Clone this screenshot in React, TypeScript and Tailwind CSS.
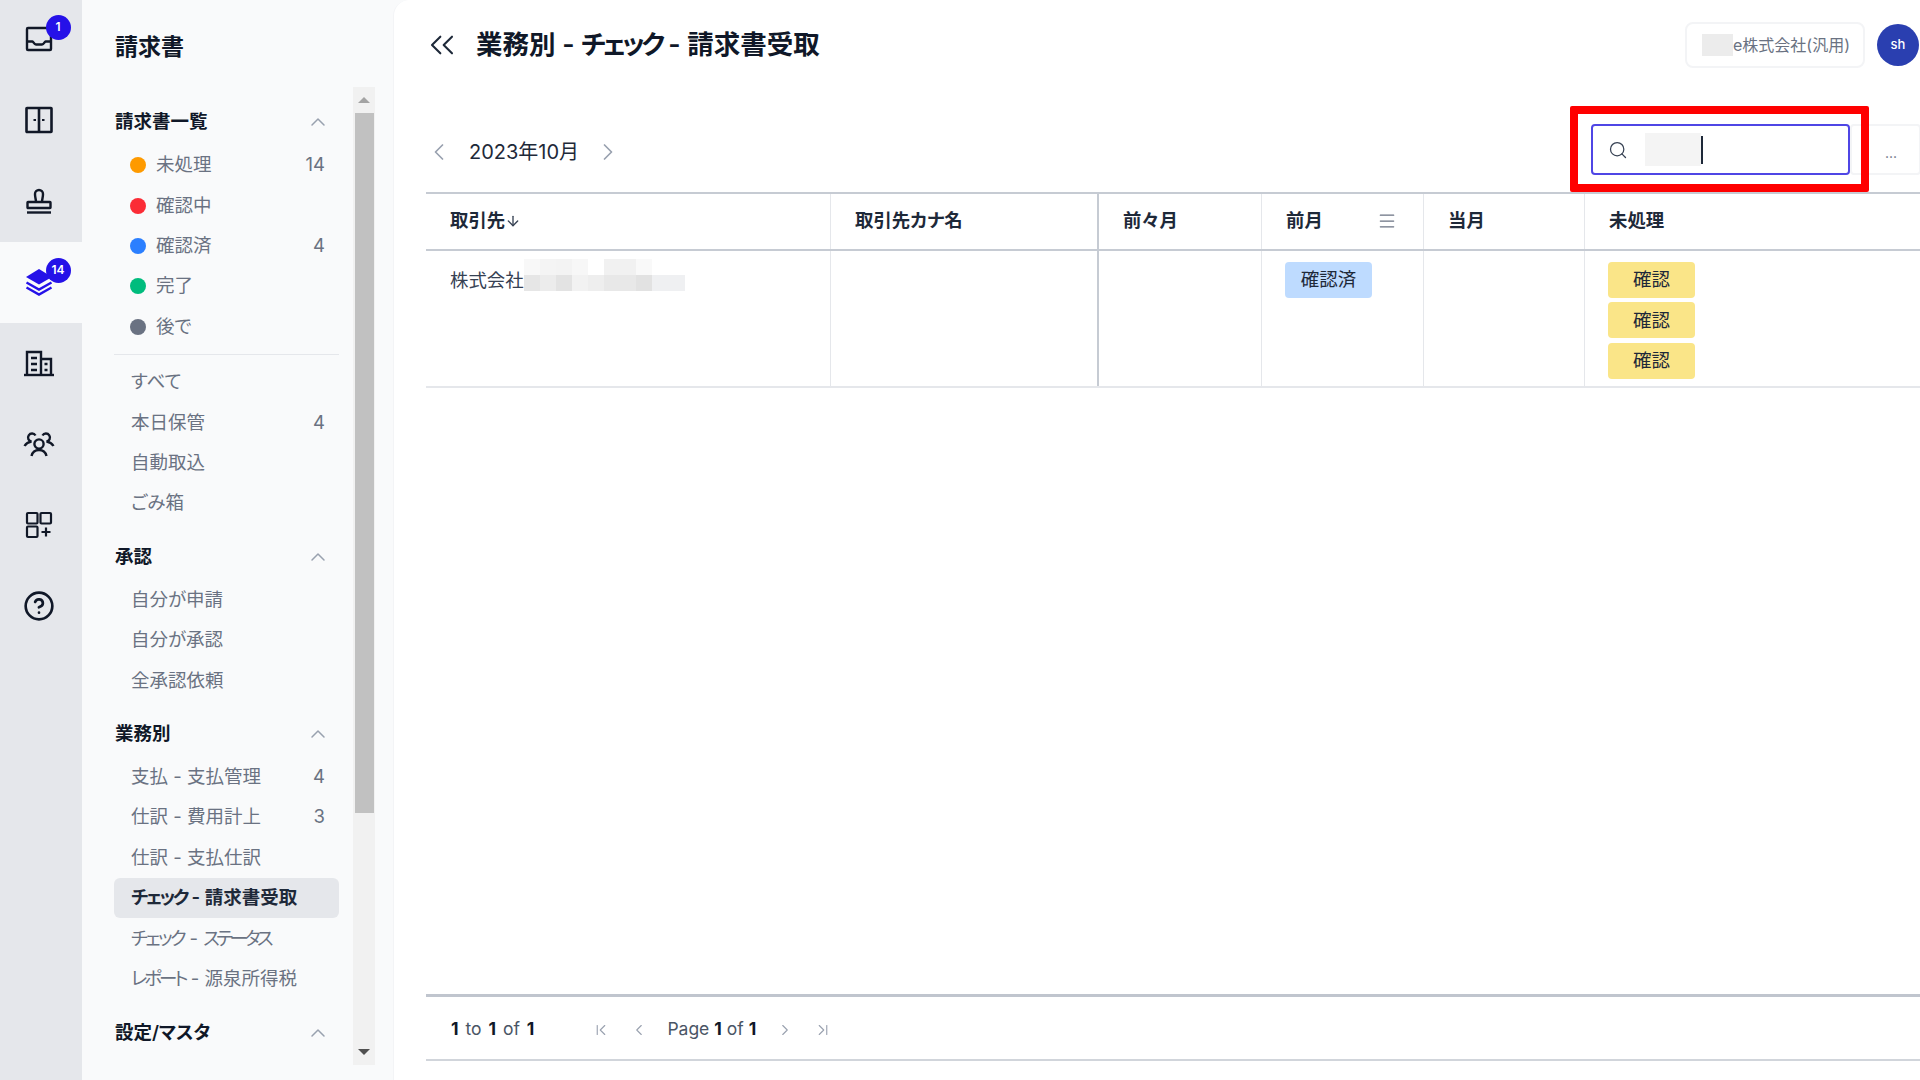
import React from 'react';
import { ChevronUp, ChevronLeft, ChevronRight, ChevronsLeft, ChevronFirst, ChevronLast, Search, CircleHelp, ArrowDown, Menu } from 'lucide-react';

const InboxIcon = () => (
  <svg viewBox="0 0 28 28" className="w-7 h-7" fill="none" stroke="#111827" strokeWidth="2.4">
    <rect x="2" y="3" width="24" height="22" rx="1" />
    <path d="M2 16.5h5.5c1 0 1.5 3 3.5 3h6c2 0 2.5-3 3.5-3H26" />
  </svg>
);
const PanelIcon = () => (
  <svg viewBox="0 0 28 28" className="w-7 h-7" fill="none" stroke="#111827" strokeWidth="2.6">
    <rect x="1.5" y="2" width="25" height="24" rx="0.5" />
    <path d="M14 2v24" />
    <path d="M8.5 14h2.5M17 14h2.5" strokeWidth="1.8" />
  </svg>
);
const StampIcon = () => (
  <svg viewBox="0 0 28 28" className="w-7 h-7" fill="none" stroke="#111827" strokeWidth="2.4">
    <path d="M11 15c0-3-1-4-1-8a4 4 0 0 1 8 0c0 4-1 5-1 8" />
    <rect x="2.5" y="15" width="23" height="6" rx="0.5" />
    <path d="M2 25.5h24" />
  </svg>
);
const LayersIcon = () => (
  <svg viewBox="0 0 28 28" className="w-7 h-7" fill="none">
    <path d="M14 1 27 9 14 16.5 1 9Z" fill="#2511e8" />
    <path d="M1.5 14.5 14 21.5 26.5 14.5" stroke="#2511e8" strokeWidth="2.4" />
    <path d="M1.5 19.5 14 26.5 26.5 19.5" stroke="#2511e8" strokeWidth="2.4" />
  </svg>
);
const BuildingIcon = () => (
  <svg viewBox="0 0 30 28" className="w-[30px] h-7" fill="none" stroke="#111827" strokeWidth="2.4">
    <path d="M0 26h30" />
    <path d="M3 26V3h14v23" />
    <path d="M17 10h10v16" />
    <path d="M7 9h6M7 15h6M7 21h6M20.5 15h3M20.5 21h3" />
  </svg>
);
const TeamIcon = () => (
  <svg viewBox="0 0 32 28" className="w-8 h-7" fill="none" stroke="#111827" strokeWidth="2.4">
    <circle cx="16" cy="14" r="4.6" />
    <path d="M8.5 26c1-4 3.5-6 7.5-6s6.5 2 7.5 6" />
    <path d="M12.5 5.5a4 4 0 1 0-4 6c-3 .5-5.5 2-7 4.5" />
    <path d="M19.5 5.5a4 4 0 1 1 4 6c3 .5 5.5 2 7 4.5" />
  </svg>
);
const AppsIcon = () => (
  <svg viewBox="0 0 28 28" className="w-7 h-7" fill="none" stroke="#111827" strokeWidth="2.2">
    <rect x="2" y="2" width="10.5" height="10.5" rx="1" />
    <rect x="15.5" y="2" width="10.5" height="10.5" rx="1" />
    <rect x="2" y="15.5" width="10.5" height="10.5" rx="1" />
    <path d="M21 16.5v9M16.5 21h9" />
  </svg>
);

const railItems = [
  { icon: <InboxIcon />, badge: '1' },
  { icon: <PanelIcon /> },
  { icon: <StampIcon /> },
  { icon: <LayersIcon />, badge: '14', active: true },
  { icon: <BuildingIcon /> },
  { icon: <TeamIcon /> },
  { icon: <AppsIcon /> },
  { icon: <CircleHelp className="w-8 h-8 text-gray-900" strokeWidth={2} /> },
];

const Row = ({ label, count, active }: { label: React.ReactNode; count?: string; active?: boolean }) => (
  <div className={`h-[40.4px] flex items-center justify-between pl-[17px] pr-[14px] rounded-md text-[18.5px] ${active ? 'bg-gray-200 font-semibold text-gray-800' : 'text-gray-500'}`}>
    <span>{label}</span>
    {count && <span>{count}</span>}
  </div>
);

const StatusRow = ({ dot, label, count }: { dot: string; label: string; count?: string }) => (
  <div className="h-[40.4px] flex items-center pl-[16px] pr-[14px] text-[18.5px] text-gray-500">
    <span className={`w-4 h-4 rounded-full ${dot}`} />
    <span className="ml-[10px]">{label}</span>
    {count && <span className="ml-auto">{count}</span>}
  </div>
);

const SectionHead = ({ label }: { label: string }) => (
  <div className="h-10 mb-[3px] flex items-center justify-between pr-[9px] text-[18.5px] font-semibold text-gray-900">
    <span className="pl-px">{label}</span>
    <ChevronUp className="w-6 h-6 text-gray-400" strokeWidth={1.5} />
  </div>
);

const Sidebar = () => (
  <div className="w-[311px] shrink-0 flex flex-col bg-gray-50 h-full">
    <div className="h-[87px] shrink-0 flex items-center pl-[33px] pt-[8px] text-[23px] font-semibold text-gray-900">請求書</div>
    <div className="h-[978px] shrink-0 flex">
      <div className="w-[271px] pl-8 pr-[14px] pt-[15px] overflow-hidden">
        <SectionHead label="請求書一覧" />
        <StatusRow dot="bg-amber-500" label="未処理" count="14" />
        <StatusRow dot="bg-red-500" label="確認中" />
        <StatusRow dot="bg-blue-500" label="確認済" count="4" />
        <StatusRow dot="bg-emerald-500" label="完了" />
        <StatusRow dot="bg-gray-500" label="後で" />
        <div className="border-t border-gray-200 mt-[7px] mb-[7px]" />
        <Row label="すべて" />
        <Row label="本日保管" count="4" />
        <Row label="自動取込" />
        <Row label="ごみ箱" />
        <div className="h-[13px]" />
        <SectionHead label="承認" />
        <Row label="自分が申請" />
        <Row label="自分が承認" />
        <Row label="全承認依頼" />
        <div className="h-[13px]" />
        <SectionHead label="業務別" />
        <Row label="支払 - 支払管理" count="4" />
        <Row label="仕訳 - 費用計上" count="3" />
        <Row label="仕訳 - 支払仕訳" />
        <Row label={<><span className="tracking-[-2.5px]">チェック</span> - 請求書受取</>} active />
        <Row label={<><span className="tracking-[-2.5px]">チェック</span> - <span className="tracking-[-3.5px]">ステータス</span></>} />
        <Row label={<><span className="tracking-[-3px]">レポート</span> - 源泉所得税</>} />
        <div className="h-[14px]" />
        <SectionHead label="設定/マスタ" />
      </div>
      <div className="w-[22px] bg-[#f1f1f1] flex flex-col items-center">
        <div className="h-[26px] flex items-center justify-center">
          <div className="w-0 h-0 border-x-[6px] border-x-transparent border-b-[6px] border-b-[#a3a3a3]" />
        </div>
        <div className="w-[19px] h-[700px] bg-[#c1c1c1]" />
        <div className="flex-1" />
        <div className="h-[26px] flex items-center justify-center">
          <div className="w-0 h-0 border-x-[6px] border-x-transparent border-t-[6px] border-t-[#505050]" />
        </div>
      </div>
    </div>
  </div>
);

const Chip = ({ label, color }: { label: string; color: string }) => (
  <div className={`w-[87px] h-[36px] shrink-0 rounded flex items-center justify-center text-[18.5px] text-gray-800 ${color}`}>{label}</div>
);

const Mosaic = () => (
  <span className="flex flex-col">
    <span className="flex h-4">
      <span className="w-4 bg-[#f8f8f8]" />
      <span className="w-4 bg-[#f4f4f4]" />
      <span className="w-4 bg-[#f3f3f3]" />
      <span className="w-4 bg-[#f7f7f7]" />
      <span className="w-4 bg-white" />
      <span className="w-8 bg-[#f1f1f1]" />
      <span className="w-4 bg-[#f9f9f9]" />
    </span>
    <span className="flex h-4">
      <span className="w-4 bg-[#e6e6e6]" />
      <span className="w-4 bg-[#ececec]" />
      <span className="w-4 bg-[#e3e3e3]" />
      <span className="w-4 bg-[#f2f2f2]" />
      <span className="w-4 bg-[#eeeeee]" />
      <span className="w-8 bg-[#e8e8e8]" />
      <span className="w-4 bg-[#e2e2e2]" />
      <span className="w-[33px] bg-[#eff0f2]" />
    </span>
  </span>
);

const cols = 'grid grid-cols-[405px_268px_163px_162px_161px_1fr]';

const Main = () => (
  <div className="flex-1 min-w-0 h-full flex flex-col bg-white rounded-tl-2xl border-l border-gray-100 pl-8">
    {/* Header */}
    <div className="h-[92px] shrink-0 flex items-center pb-[2px]">
      <ChevronsLeft className="w-10 h-10 -ml-1 text-gray-800" strokeWidth={1.25} />
      <h1 className="ml-[14px] text-[26.5px] font-semibold text-gray-900">業務別 - <span className="tracking-[-3.5px]">チェック</span> - 請求書受取</h1>
      <div className="ml-auto flex items-center">
        <div className="w-[180px] h-[46px] rounded-lg border-2 border-gray-100 flex items-center pl-[15px] text-[16px] text-gray-500">
          <span className="w-[31px] h-[22px] bg-[#ececec]" />
          <span className="whitespace-nowrap">e株式会社(汎用)</span>
        </div>
        <div className="ml-3 mr-px w-[42px] h-[42px] rounded-full bg-[#2a3fb0] flex items-center justify-center text-[13px] font-medium text-white">sh</div>
      </div>
    </div>

    {/* Month switch and search */}
    <div className="relative h-[100px] shrink-0 flex items-start pt-8">
      <div className="h-[55px] flex items-center">
        <ChevronLeft className="w-7 h-7 -ml-px text-gray-400" strokeWidth={1.5} />
        <span className="ml-[16px] text-[20px] text-gray-800">2023年10月</span>
        <ChevronRight className="w-7 h-7 ml-[15px] text-gray-400" strokeWidth={1.5} />
      </div>
      <div className="ml-auto flex items-center">
        <div className="w-[259px] h-[51px] rounded border-2 border-[#4f46e5] flex items-center pl-[15px]">
          <Search className="w-5 h-5 text-gray-700" strokeWidth={1.5} />
          <span className="ml-[17px] w-[56px] h-[33px] bg-[#f4f4f4]" />
          <span className="w-0.5 h-7 bg-gray-800" />
        </div>
        <div className="w-[71px] h-[51px] -mr-px rounded border-2 border-gray-100 flex items-end justify-end pr-[22px] pb-[13px] text-[14px] leading-none text-gray-500">...</div>
      </div>
      {/* Red annotation frame */}
      <div className="absolute top-[14px] right-[51px] w-[299px] h-[86px] border-[8px] border-[#ff0000] rounded-[2px]" />
    </div>

    {/* Table */}
    <div className={`${cols} h-[59px] shrink-0 border-y-2 border-[#c6cbd3] text-[18.4px] font-semibold text-gray-800`}>
      <div className="border-r border-gray-200 flex items-center pl-6 pb-px">取引先<ArrowDown className="w-4 h-4 text-gray-700" strokeWidth={2} /></div>
      <div className="border-r-2 border-[#c6cbd3] flex items-center pl-6 pb-px">取引先カナ名</div>
      <div className="border-r border-gray-200 flex items-center pl-6 pb-px">前々月</div>
      <div className="border-r border-gray-200 flex items-center justify-between pl-6 pr-[26px] pb-px">前月<Menu className="w-5 h-5 text-gray-500" strokeWidth={1.5} /></div>
      <div className="border-r border-gray-200 flex items-center pl-6 pb-px">当月</div>
      <div className="flex items-center pl-6 pb-px">未処理</div>
    </div>
    <div className={`${cols} h-[137px] shrink-0 border-b-2 border-gray-200 text-[18.4px] text-gray-700`}>
      <div className="border-r border-gray-200 pl-6 pt-[8px] flex items-start">
        <span className="h-9 mt-[4px] flex items-center">株式会社</span>
        <Mosaic />
      </div>
      <div className="border-r-2 border-[#c6cbd3]" />
      <div className="border-r border-gray-200" />
      <div className="border-r border-gray-200 pl-[23px] pt-[11px]"><Chip label="確認済" color="bg-blue-200" /></div>
      <div className="border-r border-gray-200" />
      <div className="pl-[23px] pt-[11px] flex flex-col gap-[4.4px]">
        <Chip label="確認" color="bg-[#fae588]" />
        <Chip label="確認" color="bg-[#fae588]" />
        <Chip label="確認" color="bg-[#fae588]" />
      </div>
    </div>
    <div className="flex-1" />

    {/* Pagination */}
    <div className="h-[67px] shrink-0 mb-[19px] pt-[3px] border-t-[3px] border-b-2 border-t-[#c0c5ce] border-b-[#d1d5db] flex items-center pl-[25px] text-[17.5px] text-gray-600">
      <span className="[word-spacing:2px]"><b className="text-gray-900">1</b> to <b className="text-gray-900">1</b> of <b className="text-gray-900">1</b></span>
      <ChevronFirst className="ml-[58px] w-[18px] h-[18px] text-gray-400" strokeWidth={1.5} />
      <ChevronLeft className="ml-5 w-[18px] h-[18px] text-gray-400" strokeWidth={1.5} />
      <span className="ml-[19px]">Page <b className="text-gray-900">1</b> of <b className="text-gray-900">1</b></span>
      <ChevronRight className="ml-5 w-[18px] h-[18px] text-gray-400" strokeWidth={1.5} />
      <ChevronLast className="ml-5 w-[18px] h-[18px] text-gray-400" strokeWidth={1.5} />
    </div>
  </div>
);

const App: React.FC = () => {
  return (
    <div className="w-[1920px] h-[1080px] overflow-hidden flex bg-gray-50 font-['Inter','Noto_Sans_CJK_JP',sans-serif] [font-feature-settings:'palt']">
      <div className="w-[82px] shrink-0 bg-gray-200 -mt-px">
        {railItems.map((item, i) => (
          <div key={i} className={`h-[81px] pb-[2px] pr-[5px] flex items-center justify-center ${item.active ? 'bg-gray-50' : ''}`}>
            <div className="relative flex items-center justify-center">
              {item.icon}
              {item.badge && (
                <span className="absolute -top-[10px] -right-[18px] w-[25px] h-[25px] rounded-full bg-[#2511e8] flex items-center justify-center text-[12px] font-semibold text-white">{item.badge}</span>
              )}
            </div>
          </div>
        ))}
      </div>
      <Sidebar />
      <Main />
    </div>
  );
};

export default App;
